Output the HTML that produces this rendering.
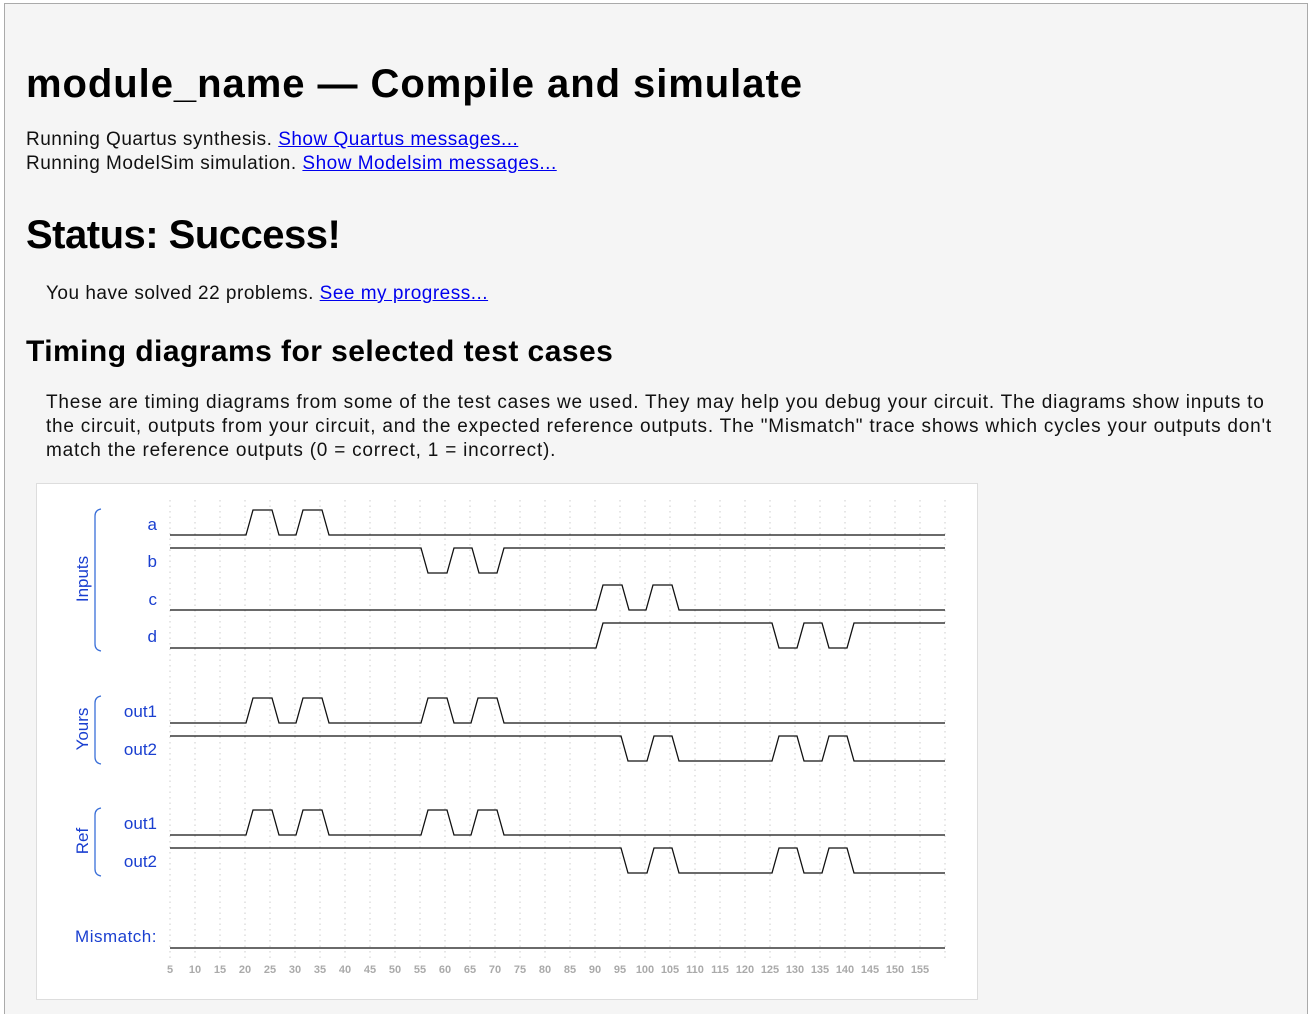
<!DOCTYPE html>
<html><head><meta charset="utf-8"><style>
html,body{margin:0;padding:0;background:#fff;overflow:hidden;}
body{width:1314px;height:1014px;position:relative;overflow:hidden;font-family:"Liberation Sans",sans-serif;}
#frame{position:absolute;left:4px;top:3px;width:1302px;height:1011px;border:1px solid #aaa;border-bottom:none;background:#f5f5f5;}
.t{position:absolute;white-space:nowrap;color:#111;}
a{color:#00e;text-decoration:underline;}
</style></head><body>
<div id="frame"></div>
<div class="t" style="left:26px;top:62px;font-size:40px;font-weight:bold;color:#000;letter-spacing:0.95px">module_name — Compile and simulate</div>
<div class="t" style="left:26px;top:128px;font-size:19px;line-height:24px;letter-spacing:0.5px">Running Quartus synthesis. <a>Show Quartus messages...</a><br>Running ModelSim simulation. <a>Show Modelsim messages...</a></div>
<div class="t" style="left:26px;top:213px;font-size:40px;font-weight:bold;color:#000;letter-spacing:-0.5px">Status: Success!</div>
<div class="t" style="left:46px;top:283px;font-size:19px;letter-spacing:0.5px">You have solved 22 problems. <a>See my progress...</a></div>
<div class="t" style="left:26px;top:335px;font-size:30px;font-weight:bold;color:#000;letter-spacing:0.45px">Timing diagrams for selected test cases</div>
<div class="t" style="left:46px;top:391px;font-size:19px;line-height:24px;letter-spacing:0.78px">These are timing diagrams from some of the test cases we used. They may help you debug your circuit. The diagrams show inputs to<br>the circuit, outputs from your circuit, and the expected reference outputs. The "Mismatch" trace shows which cycles your outputs don't<br>match the reference outputs (0 = correct, 1 = incorrect).</div>
<svg style="position:absolute;left:0;top:0" width="1314" height="1014" font-family="Liberation Sans, sans-serif">
<rect x="36.5" y="483.5" width="941" height="516" fill="#fff" stroke="#ddd"/>
<g stroke="#ccc" stroke-dasharray="1.5,4" stroke-width="1">
<path d="M170 500V960M195 500V960M220 500V960M245 500V960M270 500V960M295 500V960M320 500V960M345 500V960M370 500V960M395 500V960M420 500V960M445 500V960M470 500V960M495 500V960M520 500V960M545 500V960M570 500V960M595 500V960M620 500V960M645 500V960M670 500V960M695 500V960M720 500V960M745 500V960M770 500V960M795 500V960M820 500V960M845 500V960M870 500V960M895 500V960M920 500V960M945 500V960"/>
</g>
<g fill="none" stroke="#111" stroke-width="1.3">
<path d="M170 535H246L253 510H272L279 535H296L303 510H322L329 535H945"/>
<path d="M170 548H421L428 573H447L454 548H472L479 573H497L504 548H945"/>
<path d="M170 610H596L603 585H622L629 610H646L653 585H672L679 610H945"/>
<path d="M170 648H596L603 623H772L779 648H797L804 623H822L829 648H847L854 623H945"/>
<path d="M170 723H246L253 698H272L279 723H296L303 698H322L329 723H421L428 698H447L454 723H471L478 698H497L504 723H945"/>
<path d="M170 736H621L628 761H647L654 736H672L679 761H772L779 736H797L804 761H822L829 736H847L854 761H945"/>
<path d="M170 835H246L253 810H272L279 835H296L303 810H322L329 835H421L428 810H447L454 835H471L478 810H497L504 835H945"/>
<path d="M170 848H621L628 873H647L654 848H672L679 873H772L779 848H797L804 873H822L829 848H847L854 873H945"/>
<path d="M170 948H945"/>
</g>
<g fill="none" stroke="#3a6fd8" stroke-width="1.3">
<path d="M101 509Q95 510 95 516V644Q95 650 101 651"/>
<path d="M101 696Q95 697 95 703V757Q95 763 101 764"/>
<path d="M101 808Q95 809 95 815V869Q95 875 101 876"/>
</g>
<g fill="#1a3fd0" font-size="17" text-anchor="end">
<text x="157" y="530">a</text><text x="157" y="567">b</text><text x="157" y="605">c</text><text x="157" y="642">d</text>
<text x="157" y="717">out1</text><text x="157" y="755">out2</text>
<text x="157" y="829">out1</text><text x="157" y="867">out2</text>
<text x="157" y="942" letter-spacing="0.5">Mismatch:</text>
</g>
<g fill="#1a3fd0" font-size="17" text-anchor="middle">
<text transform="translate(88,579) rotate(-90)">Inputs</text>
<text transform="translate(88,729) rotate(-90)">Yours</text>
<text transform="translate(88,841) rotate(-90)">Ref</text>
</g>
<g fill="#aaa" font-size="11" font-weight="bold" text-anchor="middle">
<text x="170" y="973">5</text><text x="195" y="973">10</text><text x="220" y="973">15</text><text x="245" y="973">20</text><text x="270" y="973">25</text><text x="295" y="973">30</text><text x="320" y="973">35</text><text x="345" y="973">40</text><text x="370" y="973">45</text><text x="395" y="973">50</text><text x="420" y="973">55</text><text x="445" y="973">60</text><text x="470" y="973">65</text><text x="495" y="973">70</text><text x="520" y="973">75</text><text x="545" y="973">80</text><text x="570" y="973">85</text><text x="595" y="973">90</text><text x="620" y="973">95</text><text x="645" y="973">100</text><text x="670" y="973">105</text><text x="695" y="973">110</text><text x="720" y="973">115</text><text x="745" y="973">120</text><text x="770" y="973">125</text><text x="795" y="973">130</text><text x="820" y="973">135</text><text x="845" y="973">140</text><text x="870" y="973">145</text><text x="895" y="973">150</text><text x="920" y="973">155</text>
</g>
</svg>
</body></html>
